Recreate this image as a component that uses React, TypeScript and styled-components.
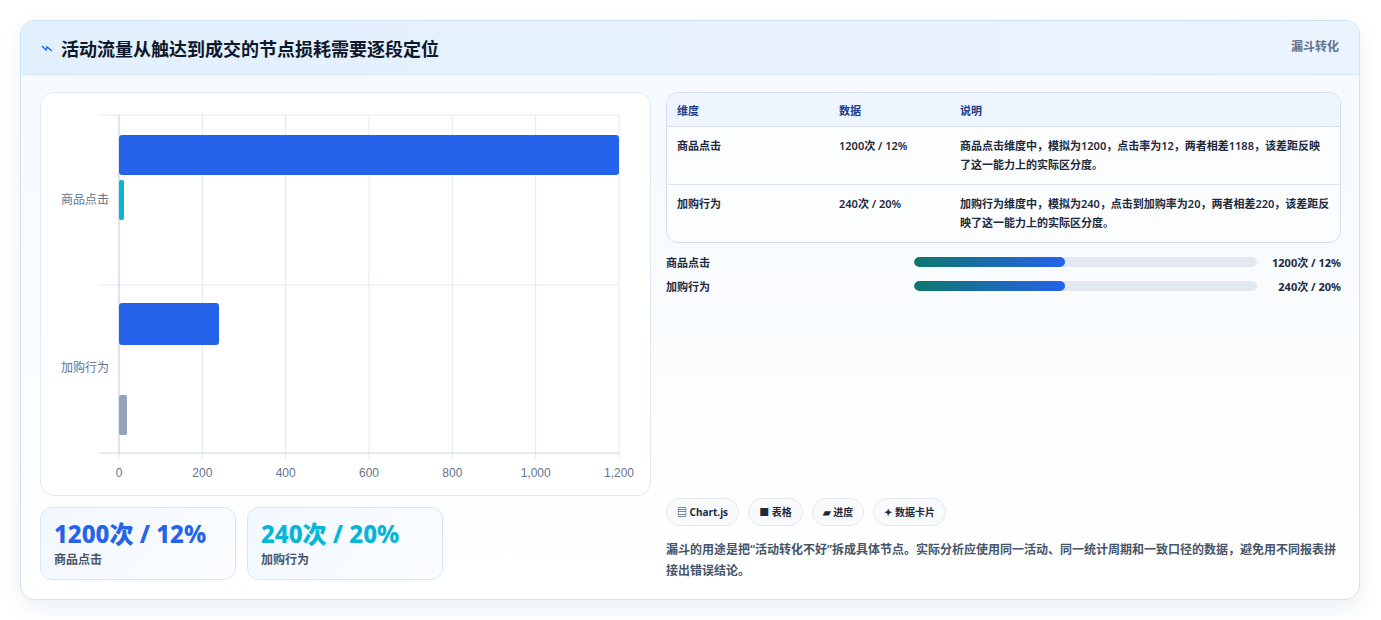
import React from "react";
import styled, { createGlobalStyle } from "styled-components";

const G = createGlobalStyle`
  body { margin: 0; background: #fff; font-family: "Noto Sans", "Noto Sans CJK SC", sans-serif; }
`;
const Page = styled.div`padding: 20px 21px 20px 20px; height: 620px; box-sizing: border-box;`;
const Card = styled.div`
  border: 1px solid #cfe3f3; border-radius: 14px; overflow: hidden;
  background: linear-gradient(180deg, #f4f9fe 0%, #ffffff 100%);
  box-shadow: 0 8px 20px rgba(30,60,100,0.08); height: 580px; box-sizing: border-box;
  display: flex; flex-direction: column;
`;
const Header = styled.div`
  height: 54px; box-sizing: border-box; display: flex; align-items: center; justify-content: space-between;
  padding: 0 20px; background: linear-gradient(90deg, #e2f0fd, #eaf3fe); border-bottom: 1px solid #d6e6f5;
`;
const Title = styled.h1`
  margin: 0; font-size: 18px; font-weight: 700; color: #0f172a; display: flex; align-items: center; gap: 8px;
`;
const Tag = styled.span`font-size: 12px; font-weight: 700; color: #64748b; align-self: flex-start; margin-top: 16px;`;
const Body = styled.div`flex: 1; display: grid; grid-template-columns: 611px 1fr; gap: 15px; padding: 17px 18px 18px 19px;`;
const Left = styled.div`display: flex; flex-direction: column; gap: 11px;`;
const ChartBox = styled.div`
  background: #fff; border: 1px solid #e0e9f2; border-radius: 14px; height: 404px; box-sizing: border-box;
`;
const Stats = styled.div`display: flex; gap: 11px;`;
const Stat = styled.div`
  width: 196px; height: 73px; box-sizing: border-box; border: 1px solid #d6e6f5; border-radius: 12px;
  background: linear-gradient(135deg, #f2f8ff, #fbfdff); padding: 10px 13px;
`;
const StatVal = styled.div<{ c: string }>`font-size: 24px; font-weight: 800; color: ${p => p.c}; line-height: 32px;`;
const StatLbl = styled.div`font-size: 12px; color: #475569; font-weight: 600;`;
const Right = styled.div`display: flex; flex-direction: column;`;
const Table = styled.table`
  width: 100%; border-collapse: separate; border-spacing: 0; border: 1px solid #d4dfeb; border-radius: 12px; overflow: hidden;
  font-size: 11px; color: #1e293b; font-weight: 600; background: #fbfdff;
  th { text-align: left; color: #1e3a8a; background: #eef5fe; height: 33px; padding: 0 10px; border-bottom: 1px solid #d4dfeb; }
  td { vertical-align: top; padding: 9px 10px 10px; line-height: 19px; }
  tr + tr td { border-top: 1px solid #dde6ef; }
`;
const Prog = styled.div`display: grid; grid-template-columns: 1fr 343px 84px; align-items: center; font-size: 11px; font-weight: 700; color: #1e293b; height: 24px;`;
const Track = styled.div`height: 10px; background: #e2e8f0; border-radius: 5px; overflow: hidden;`;
const Fill = styled.div`height: 100%; background: linear-gradient(90deg, #0f766e, #2563eb); border-radius: 5px;`;
const PVal = styled.div`text-align: right;`;
const Spacer = styled.div`flex: 1;`;
const Chips = styled.div`display: flex; gap: 9px;`;
const Chip = styled.span`
  font-size: 10px; font-weight: 700; color: #1e293b; border: 1px solid #e2e8f0; border-radius: 14px; background: #f8fafc;
  padding: 6px 10px; line-height: 14px;
`;
const Desc = styled.p`margin: 13px 0 0; font-size: 12px; line-height: 21px; color: #475569; font-weight: 600;`;

function Chart() {
  const x0 = 78, w = 500, y0 = 22, h = 338;
  const sx = (v: number) => (v / 1200) * w;
  const ticks = [0, 200, 400, 600, 800, 1000, 1200];
  return (
    <svg width="609" height="402">
      {ticks.map(t => (
        <g key={t}>
          <line x1={x0 + sx(t)} x2={x0 + sx(t)} y1={y0} y2={y0 + h + 6} stroke="#e2e8f0" />
          <text x={x0 + sx(t)} y={y0 + h + 24} fontSize="12" fill="#64748b" textAnchor="middle" fontFamily="Liberation Sans, sans-serif">{t.toLocaleString("en-US")}</text>
        </g>
      ))}
      <line x1={x0 - 20} x2={x0 + w} y1={y0} y2={y0} stroke="#e2e8f0" />
      <line x1={x0 - 20} x2={x0 + w} y1={y0 + 170} y2={y0 + 170} stroke="#e2e8f0" />
      <line x1={x0 - 20} x2={x0 + w} y1={y0 + h} y2={y0 + h} stroke="#cbd5e1" />
      <line x1={x0} x2={x0} y1={y0} y2={y0 + h} stroke="#cbd5e1" />
      <rect x={x0} y={42} width={sx(1200)} height={40} rx="3" fill="#2563eb" />
      <rect x={x0} y={87} width={5} height={40} rx="2" fill="#06b6d4" />
      <rect x={x0} y={210} width={sx(240)} height={42} rx="3" fill="#2563eb" />
      <rect x={x0} y={302} width={8} height={40} rx="2" fill="#94a3b8" />
      <text x={x0 - 10} y={111} fontSize="12" fill="#64748b" textAnchor="end">商品点击</text>
      <text x={x0 - 10} y={279} fontSize="12" fill="#64748b" textAnchor="end">加购行为</text>
    </svg>
  );
}

export default function App() {
  return (
    <Page>
      <G />
      <Card>
        <Header>
          <Title>
            <svg width="12" height="10" viewBox="0 0 12 10"><path d="M1 3 L5 7 L6 4 L11 8" stroke="#2563eb" strokeWidth="1.4" fill="none" /></svg>
            活动流量从触达到成交的节点损耗需要逐段定位
          </Title>
          <Tag>漏斗转化</Tag>
        </Header>
        <Body>
          <Left>
            <ChartBox><Chart /></ChartBox>
            <Stats>
              <Stat><StatVal c="#2563eb">1200次 / 12%</StatVal><StatLbl>商品点击</StatLbl></Stat>
              <Stat><StatVal c="#06b6d4">240次 / 20%</StatVal><StatLbl>加购行为</StatLbl></Stat>
            </Stats>
          </Left>
          <Right>
            <Table>
              <colgroup><col style={{ width: 162 }} /><col style={{ width: 121 }} /><col /></colgroup>
              <thead><tr><th>维度</th><th>数据</th><th>说明</th></tr></thead>
              <tbody>
                <tr><td>商品点击</td><td>1200次 / 12%</td><td>商品点击维度中，模拟为1200，点击率为12，两者相差1188，该差距反映了这一能力上的实际区分度。</td></tr>
                <tr><td>加购行为</td><td>240次 / 20%</td><td>加购行为维度中，模拟为240，点击到加购率为20，两者相差220，该差距反映了这一能力上的实际区分度。</td></tr>
              </tbody>
            </Table>
            <div style={{ height: 7 }} />
            <Prog><span>商品点击</span><Track><Fill style={{ width: "44%" }} /></Track><PVal>1200次 / 12%</PVal></Prog>
            <Prog><span>加购行为</span><Track><Fill style={{ width: "44%" }} /></Track><PVal>240次 / 20%</PVal></Prog>
            <Spacer />
            <Chips><Chip>▤ Chart.js</Chip><Chip>■ 表格</Chip><Chip>▰ 进度</Chip><Chip>✦ 数据卡片</Chip></Chips>
            <Desc>漏斗的用途是把“活动转化不好”拆成具体节点。实际分析应使用同一活动、同一统计周期和一致口径的数据，避免用不同报表拼接出错误结论。</Desc>
          </Right>
        </Body>
      </Card>
    </Page>
  );
}
